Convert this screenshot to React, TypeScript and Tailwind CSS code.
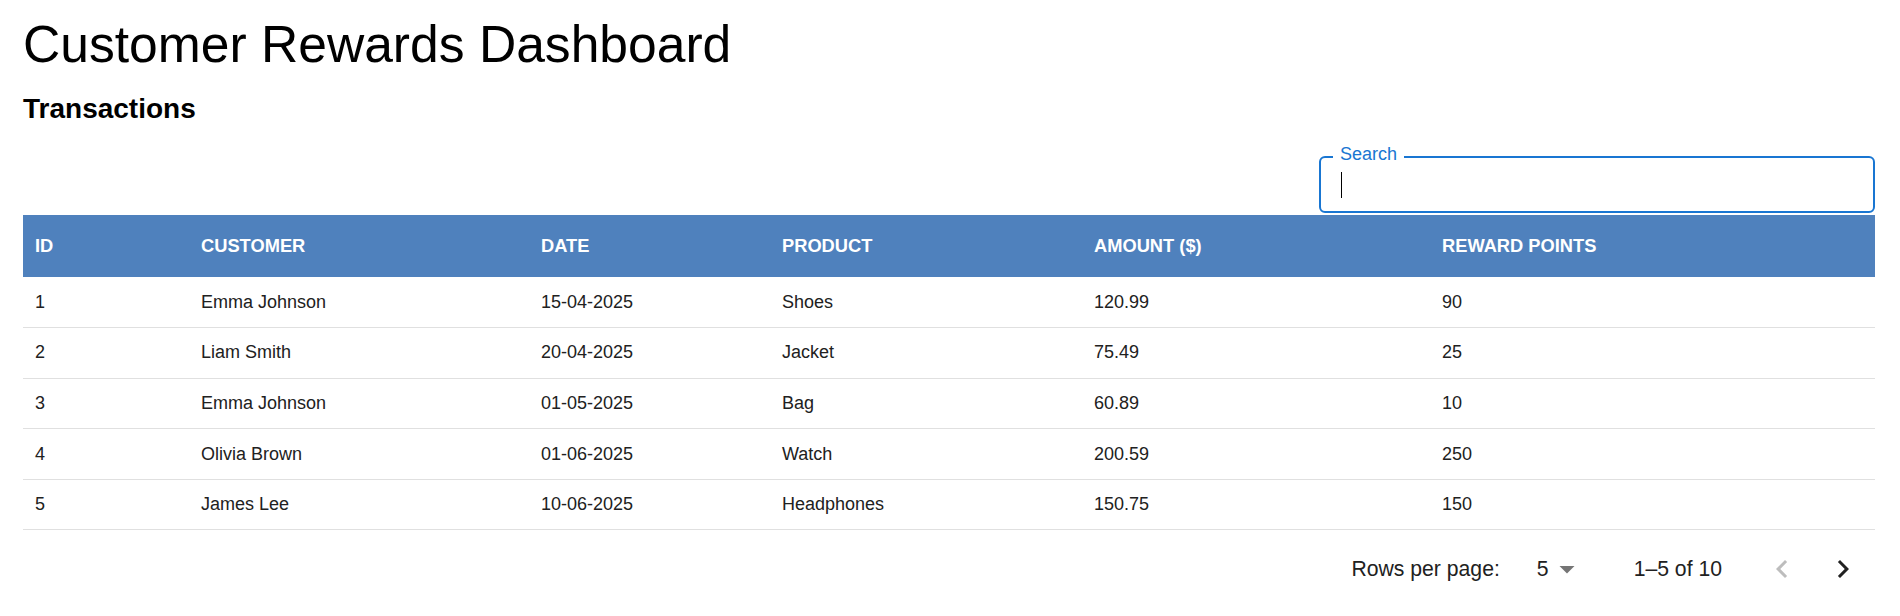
import React from 'react';

type Txn = {
  id: number;
  customer: string;
  date: string;
  product: string;
  amount: string;
  points: number;
};

const transactions: Txn[] = [
  { id: 1, customer: 'Emma Johnson', date: '15-04-2025', product: 'Shoes', amount: '120.99', points: 90 },
  { id: 2, customer: 'Liam Smith', date: '20-04-2025', product: 'Jacket', amount: '75.49', points: 25 },
  { id: 3, customer: 'Emma Johnson', date: '01-05-2025', product: 'Bag', amount: '60.89', points: 10 },
  { id: 4, customer: 'Olivia Brown', date: '01-06-2025', product: 'Watch', amount: '200.59', points: 250 },
  { id: 5, customer: 'James Lee', date: '10-06-2025', product: 'Headphones', amount: '150.75', points: 150 },
];

const App: React.FC = () => {
  return (
    <div className="min-h-screen bg-white pl-[23px] pr-[25px] text-black font-['Liberation_Sans',Arial,sans-serif]">
      {/* Page header */}
      <h1 className="mt-[14px] text-[51.6px] leading-[60px] font-normal">Customer Rewards Dashboard</h1>
      <h2 className="mt-[19px] text-[28px] leading-[32px] font-bold">Transactions</h2>

      {/* Search field */}
      <div className="mt-[31px] flex justify-end">
        <div className="relative w-[556px] h-[57px] rounded-[6px] border-2 border-[#1976d2]">
          <span className="absolute left-[12px] top-[-13px] bg-white px-[7px] text-[18px] leading-[18px] text-[#1976d2]">
            Search
          </span>
          <div className="absolute left-[20px] top-[14px] h-[26px] w-px bg-black" />
        </div>
      </div>

      {/* Table */}
      <table className="mt-[2px] w-full table-fixed border-collapse text-left">
        <thead>
          <tr className="bg-[#4f81bd] text-white">
            <th className="w-[166px] h-[62px] pl-[12px] text-[18.3px] font-bold uppercase">ID</th>
            <th className="w-[340px] pl-[12px] text-[18.3px] font-bold uppercase">Customer</th>
            <th className="w-[241px] pl-[12px] text-[18.3px] font-bold uppercase">Date</th>
            <th className="w-[312px] pl-[12px] text-[18.3px] font-bold uppercase">Product</th>
            <th className="w-[348px] pl-[12px] text-[18.3px] font-bold uppercase">Amount ($)</th>
            <th className="pl-[12px] text-[18.3px] font-bold uppercase">Reward Points</th>
          </tr>
        </thead>
        <tbody className="text-[18px] text-[#212121]">
          {transactions.map(t => (
            <tr key={t.id} className="border-b border-[#e0e0e0]">
              <td className="h-[50.6px] pl-[12px]">{t.id}</td>
              <td className="pl-[12px]">{t.customer}</td>
              <td className="pl-[12px]">{t.date}</td>
              <td className="pl-[12px]">{t.product}</td>
              <td className="pl-[12px]">{t.amount}</td>
              <td className="pl-[12px]">{t.points}</td>
            </tr>
          ))}
        </tbody>
      </table>

      {/* Pagination */}
      <div className="flex h-[78px] items-center justify-end pr-[14px] text-[21.2px] leading-[24px] text-[#212121]">
        <span>Rows per page:</span>
        <div className="ml-[37px] flex items-center">
          <span>5</span>
          <svg viewBox="0 0 24 24" className="size-[36px] fill-[#757575]">
            <path d="M7 10l5 5 5-5z" />
          </svg>
        </div>
        <span className="ml-[49px]">1–5 of 10</span>
        <button className="ml-[42px] flex size-[36px] items-center justify-center" disabled>
          <svg viewBox="0 0 24 24" className="size-[36px] fill-[#bdbdbd]">
            <path d="M15.41 7.41 14 6l-6 6 6 6 1.41-1.41L10.83 12z" />
          </svg>
        </button>
        <button className="ml-[25px] flex size-[36px] items-center justify-center">
          <svg viewBox="0 0 24 24" className="size-[36px] fill-[#212121]">
            <path d="M10 6 8.59 7.41 13.17 12l-4.58 4.59L10 18l6-6z" />
          </svg>
        </button>
      </div>
    </div>
  );
};

export default App;
